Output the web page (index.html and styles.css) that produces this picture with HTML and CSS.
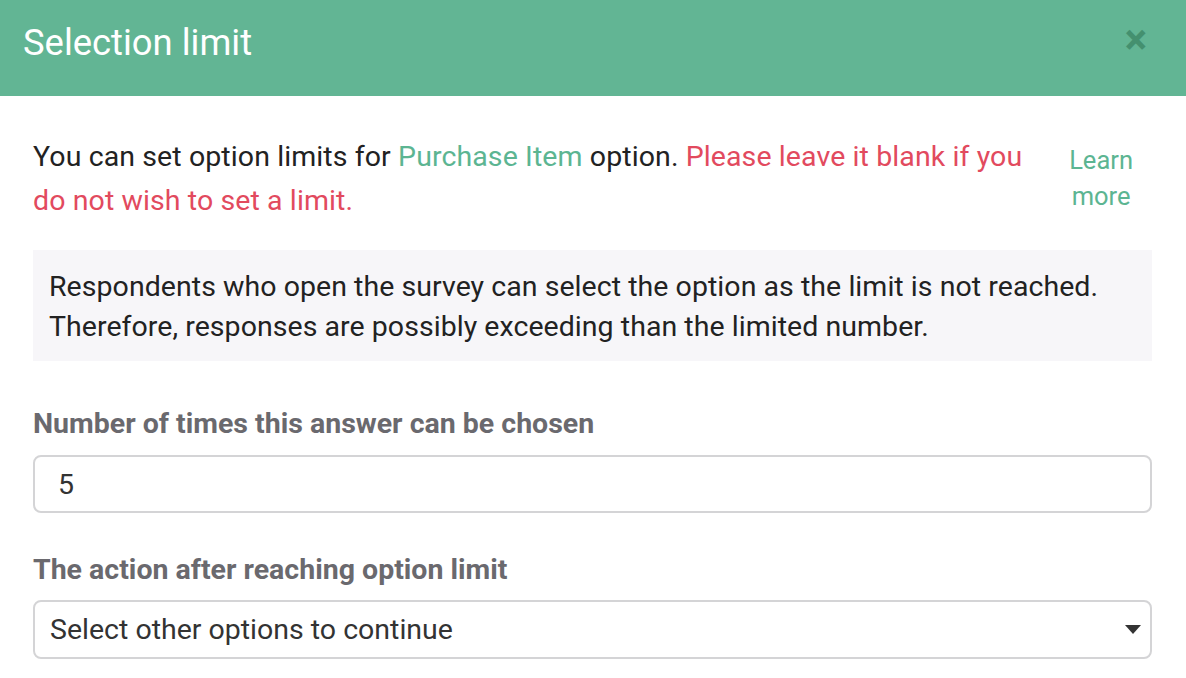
FILE: index.html
```html
<!DOCTYPE html>
<html>
<head>
<meta charset="utf-8">
<link rel="stylesheet" href="styles.css">
</head>
<body>
<div class="modal">
  <div class="modal-header">
    <h1 class="modal-title">Selection limit</h1>
    <span class="close">&times;</span>
  </div>
  <div class="modal-body">
    <div class="intro">
      <p class="intro-text">You can set option limits for <span class="green">Purchase Item</span> option. <span class="red">Please leave it blank if you do not wish to set a limit.</span></p>
      <a class="learn">Learn<br>more</a>
    </div>
    <div class="notice">Respondents who open the survey can select the option as the limit is not reached.<br>Therefore, responses are possibly exceeding than the limited number.</div>
    <div class="field field-first">
      <label class="field-label">Number of times this answer can be chosen</label>
      <div class="input">5</div>
    </div>
    <div class="field field-second">
      <label class="field-label">The action after reaching option limit</label>
      <div class="select">
        <span>Select other options to continue</span>
        <svg class="caret" width="16" height="9" viewBox="0 0 16 9"><path d="M0 0H16L8 9Z" fill="#333"/></svg>
      </div>
    </div>
  </div>
</div>
</body>
</html>
```

FILE: styles.css
```css
html, body {
  margin: 0;
  padding: 0;
  background: #fff;
  font-family: Roboto, "Noto Sans", sans-serif;
}
.modal {
  width: 1186px;
}
.modal-header {
  height: 96px;
  background: #62b594;
  display: flex;
  align-items: center;
  justify-content: space-between;
  padding: 0 39px 0 23px;
  box-sizing: border-box;
}
.modal-title {
  margin: 0;
  font-size: 36.4px;
  font-weight: 400;
  color: #fff;
  padding-bottom: 12px;
}
.close {
  font-size: 42px;
  font-weight: 700;
  color: #3d8767;
  opacity: 0.8;
  line-height: 1;
  padding-bottom: 16px;
}
.modal-body {
  padding: 39px 34px 0 33px;
}
.intro {
  display: flex;
  align-items: flex-start;
  justify-content: space-between;
}
.intro-text {
  margin: 0;
  width: 1010px;
  font-size: 28.5px;
  letter-spacing: 0.1px;
  line-height: 44px;
  color: #222;
}
.green { color: #5cb592; }
.red { color: #e24a5e; }
.learn {
  color: #5cb592;
  font-size: 25.5px;
  line-height: 36px;
  text-align: center;
  margin-top: 7px;
  margin-right: 19px;
}
.notice {
  margin-top: 27px;
  background: #f7f6f9;
  padding: 17px 16px 14px;
  font-size: 28.5px;
  letter-spacing: 0.05px;
  line-height: 40px;
  color: #222;
}
.field-first {
  margin-top: 46px;
}
.field-second {
  margin-top: 40px;
}
.field-label {
  display: block;
  font-size: 28.5px;
  font-weight: 700;
  color: #6a696e;
  line-height: 34px;
}
.input, .select {
  height: 58px;
  border: 2px solid #d4d4d6;
  border-radius: 8px;
  box-sizing: border-box;
  display: flex;
  align-items: center;
  font-size: 28.5px;
  color: #333;
}
.input {
  margin-top: 14px;
  padding-left: 23px;
}
.select {
  margin-top: 13px;
  height: 59px;
  padding: 0 9px 0 15px;
  justify-content: space-between;
}
.caret {
  display: block;
}
```
